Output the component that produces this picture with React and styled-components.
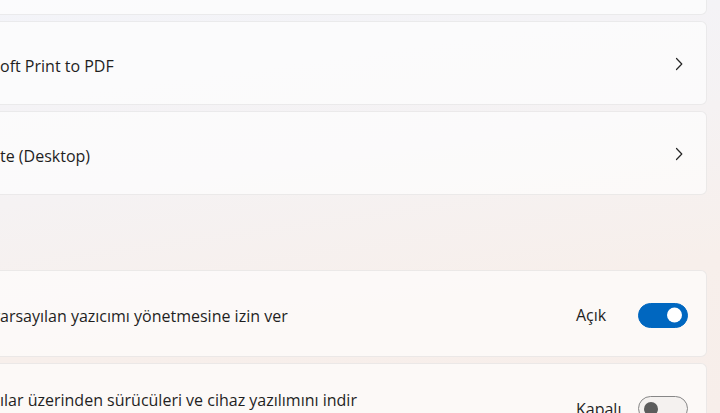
import React from 'react';
import styled, { createGlobalStyle } from 'styled-components';

const GlobalStyle = createGlobalStyle`
  html, body {
    margin: 0;
    padding: 0;
    height: 100%;
    overflow: hidden;
  }
  body {
    font-family: "Open Sans", "Noto Sans", "Liberation Sans", sans-serif;
    color: #1f1f1f;
    background: linear-gradient(172deg, #f3f4f9 0%, #f5f2f3 40%, #f7efeb 70%, #f7eeea 100%);
  }
`;

const Page = styled.div`
  width: 747px;
  margin: -69px 0 0 -40px;
  display: flex;
  flex-direction: column;
`;

const Group = styled.div`
  display: flex;
  flex-direction: column;
  gap: 6px;
  margin-top: ${p => p.$offset || 0}px;
`;

const Card = styled.div`
  display: flex;
  align-items: center;
  min-height: ${p => p.$height || 84}px;
  box-sizing: border-box;
  padding: 0 18px 0 39px;
  background: rgba(255, 255, 255, 0.62);
  border: 1px solid rgba(0, 0, 0, 0.065);
  border-radius: 6px;
`;

const TextBlock = styled.div`
  flex: 1;
  display: flex;
  flex-direction: column;
  padding-top: 5px;
`;

const Title = styled.div`
  font-size: 16px;
  line-height: 22px;
  white-space: nowrap;
`;

const Sub = styled.div`
  font-size: 13px;
  line-height: 20px;
  color: #616161;
  white-space: nowrap;
`;

// keeps the start of a label that lies off the left edge of the window
const Cut = styled.span`
  display: inline-block;
  width: 0;
  direction: rtl;
  white-space: nowrap;

  & > span {
    display: inline-block;
    direction: ltr;
  }
`;

const ChevronBox = styled.div`
  width: 24px;
  display: flex;
  justify-content: center;
  margin-right: -3px;
  padding-top: 2px;
`;

const Control = styled.div`
  display: flex;
  align-items: center;
  padding-top: 3px;
`;

const StateText = styled.span`
  width: 62px;
  font-size: 16px;
`;

const Track = styled.div`
  position: relative;
  width: 50px;
  height: 25px;
  box-sizing: border-box;
  border-radius: 13px;
  background: ${p => (p.$on ? '#0067c0' : 'rgba(0, 0, 0, 0.03)')};
  border: 1px solid ${p => (p.$on ? '#0067c0' : '#878787')};
`;

const Knob = styled.div`
  position: absolute;
  top: 50%;
  width: ${p => (p.$on ? 15 : 14)}px;
  height: ${p => (p.$on ? 15 : 14)}px;
  border-radius: 50%;
  transform: translateY(-50%);
  background: ${p => (p.$on ? '#ffffff' : '#5c5c5c')};
  ${p => (p.$on ? 'right: 5px;' : 'left: 5px;')}
`;

const Label = ({ hidden, text }) => (
  <>
    <Cut><span>{hidden}</span></Cut>
    {text}
  </>
);

const Chevron = () => (
  <ChevronBox>
    <svg width="8" height="14" viewBox="0 0 8 14" fill="none">
      <path d="M1.5 1.5 L6.8 7 L1.5 12.5" stroke="#262626" strokeWidth="1.2" strokeLinecap="round" strokeLinejoin="round" />
    </svg>
  </ChevronBox>
);

const Toggle = ({ on }) => (
  <Control>
    <StateText>{on ? 'Açık' : 'Kapalı'}</StateText>
    <Track $on={on}>
      <Knob $on={on} />
    </Track>
  </Control>
);

const printers = [
  { hidden: 'Micros', text: 'oft XPS Document Writer' },
  { hidden: 'Micros', text: 'oft Print to PDF' },
  { hidden: 'OneNo', text: 'te (Desktop)' },
];

export default function App() {
  return (
    <>
      <GlobalStyle />
      <Page>
        <Group>
          {printers.map(p => (
            <Card key={p.text}>
              <TextBlock>
                <Title><Label hidden={p.hidden} text={p.text} /></Title>
              </TextBlock>
              <Chevron />
            </Card>
          ))}
        </Group>
        <Group $offset={75}>
          <Card $height={87}>
            <TextBlock>
              <Title><Label hidden="Windows'un v" text="arsayılan yazıcımı yönetmesine izin ver" /></Title>
            </TextBlock>
            <Toggle on />
          </Card>
          <Card $height={88}>
            <TextBlock>
              <Title><Label hidden="Tarifeli bağlant" text="ılar üzerinden sürücüleri ve cihaz yazılımını indir" /></Title>
              <Sub><Label hidden="Veri ücretleri" text=" uygulanabilir" /></Sub>
            </TextBlock>
            <Toggle on={false} />
          </Card>
        </Group>
      </Page>
    </>
  );
}
